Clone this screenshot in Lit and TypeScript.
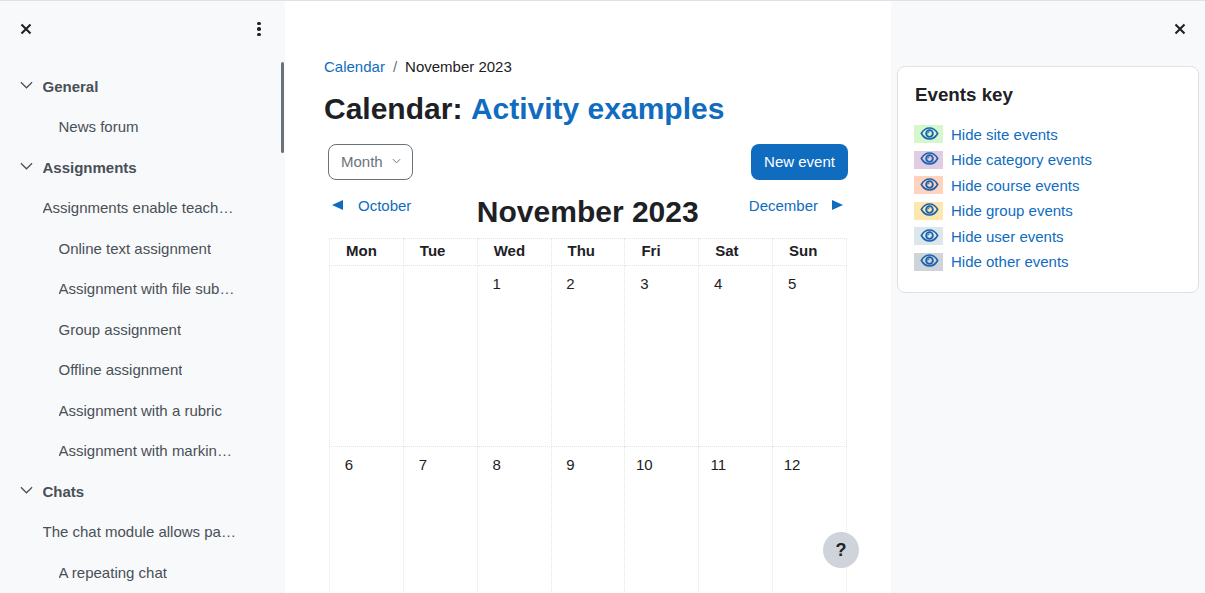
import { LitElement, html, css, svg } from "lit";
import { customElement } from "lit/decorators.js";

const close = html`<svg class="x" viewBox="0 0 12 12" width="12" height="12"><path d="M1.5 1.5 10.5 10.5M10.5 1.5 1.5 10.5" stroke="#1d2125" stroke-width="2.1" fill="none"/></svg>`;
const chevron = html`<svg class="chev" viewBox="0 0 14 8" width="13" height="8"><path d="M1 1 7 7 13 1" stroke="#495057" stroke-width="1.3" fill="none"/></svg>`;
const eye = svg`<svg class="eye" viewBox="0 0 20 14" width="19" height="13"><path d="M1.2 7C3.5 3 6.5 1.1 10 1.1S16.5 3 18.8 7C16.5 11 13.5 12.9 10 12.9S3.5 11 1.2 7Z" fill="none" stroke="#1a62ad" stroke-width="1.7"/><circle cx="10" cy="7" r="3.6" fill="none" stroke="#1a62ad" stroke-width="2"/><path d="M10 5.2A1.8 1.8 0 0 0 8.2 7" fill="none" stroke="#1a62ad" stroke-width="1.1"/></svg>`;

type Row = { t: string; k: "sec" | "l1" | "l2" };
const rows: Row[] = [
  { t: "General", k: "sec" },
  { t: "News forum", k: "l2" },
  { t: "Assignments", k: "sec" },
  { t: "Assignments enable teachers to grade", k: "l1" },
  { t: "Online text assignment", k: "l2" },
  { t: "Assignment with file submissions", k: "l2" },
  { t: "Group assignment", k: "l2" },
  { t: "Offline assignment", k: "l2" },
  { t: "Assignment with a rubric", k: "l2" },
  { t: "Assignment with marking guide", k: "l2" },
  { t: "Chats", k: "sec" },
  { t: "The chat module allows participants", k: "l1" },
  { t: "A repeating chat", k: "l2" },
];
const keys = [
  ["site", "#d4f7cd"],
  ["category", "#e0cce3"],
  ["course", "#ffd3bd"],
  ["group", "#fee7ae"],
  ["user", "#dce7ec"],
  ["other", "#ced4da"],
];
const days = ["Mon", "Tue", "Wed", "Thu", "Fri", "Sat", "Sun"];
const weeks = [
  ["", "", "1", "2", "3", "4", "5"],
  ["6", "7", "8", "9", "10", "11", "12"],
];

@customElement("app-root")
export class AppRoot extends LitElement {
  static styles = css`
    :host {
      display: block;
      height: 100vh;
      overflow: hidden;
      font-family: "Liberation Sans", Arial, sans-serif;
      font-size: 15px;
      color: #1d2125;
    }
    a { color: #0f6cbf; text-decoration: none; }
    .page {
      position: relative;
      display: grid;
      grid-template-columns: 285px 606px 1fr;
      height: 100%;
      box-sizing: border-box;
      border-top: 1px solid #dee2e6;
      overflow: hidden;
    }
    .left, .right { background: #f8f9fa; overflow: hidden; }
    .left { position: relative; }
    .lhead {
      display: flex;
      justify-content: space-between;
      align-items: center;
      height: 56px;
      padding: 0 24px 0 20px;
      margin-bottom: 9px;
    }
    .dots { display: flex; flex-direction: column; gap: 2px; }
    .dots i { width: 3.6px; height: 3.6px; background: #1d2125; border-radius: 50%; display: block; }
    .row {
      display: flex;
      align-items: center;
      height: 40.5px;
      width: 240px;
      color: #495057;
      box-sizing: border-box;
    }
    .row span { overflow: hidden; white-space: nowrap; text-overflow: ellipsis; min-width: 0; }
    .row.sec { font-weight: 700; padding-left: 20px; }
    .row.l1 { padding-left: 42.5px; }
    .row.l2 { padding-left: 58.5px; }
    .chev { flex: none; margin-right: 9.5px; margin-top: -3px; }
    .thumb {
      position: absolute;
      right: 1px;
      top: 61px;
      width: 3px;
      height: 91px;
      background: #6a737b;
      border-radius: 2px;
    }
    .main { padding: 0 0 0 39px; overflow: hidden; }
    .crumbs {
      display: flex;
      align-items: center;
      gap: 8px;
      height: 22px;
      margin-top: 54px;
    }
    .crumbs .sep { color: #6a737b; }
    h2 {
      margin: 14px 0 0;
      font-size: 30px;
      line-height: 36px;
      font-weight: 700;
    }
    h2 a { margin-left: 0.2px; }
    .bar {
      display: flex;
      justify-content: space-between;
      width: 520px;
      margin: 17px 0 0 4px;
    }
    .select {
      display: flex;
      align-items: center;
      gap: 9px;
      height: 36px;
      width: 85px;
      box-sizing: border-box;
      padding: 0 0 1px 12px;
      border: 1px solid #6a737b;
      border-radius: 8px;
      color: #6a737b;
    }
    .select svg { margin-top: -1px; }
    .btn {
      display: flex;
      align-items: center;
      justify-content: center;
      width: 97px;
      height: 36px;
      box-sizing: border-box;
      padding-bottom: 1px;
      background: #0f6cbf;
      color: #fff;
      border-radius: 8px;
    }
    .nav {
      display: grid;
      grid-template-columns: 1fr auto 1fr;
      width: 517px;
      height: 58px;
      margin-left: 5px;
    }
    .nav h3 {
      margin: 14px 0 0 0.5px;
      font-size: 30px;
      line-height: 36px;
      font-weight: 700;
    }
    .nl { display: flex; align-items: center; height: 22px; margin-top: 14px; gap: 14px; }
    .nl:not(.r) { gap: 15px; }
    .nl.r { justify-content: flex-end; padding-right: 3px; }
    .arrow { width: 0; height: 0; border-top: 5.5px solid transparent; border-bottom: 5.5px solid transparent; }
    .arrow.p { border-right: 11px solid #0f6cbf; margin-left: 3px; }
    .arrow.n { border-left: 11px solid #0f6cbf; }
    table {
      border-collapse: collapse;
      table-layout: fixed;
      width: 518px;
      margin-left: 5px;
    }
    th, td { border: 1px dotted #e3e6e9; padding: 0; text-align: left; }
    th { height: 23px; padding: 0 0 3px 16px; font-weight: 700; }
    td { height: 173px; vertical-align: top; padding: 7px 0 0 7px; line-height: 22px; }
    td span { display: inline-block; width: 24px; text-align: center; }
    .right { padding: 0 6px; }
    .rhead { display: flex; justify-content: flex-end; align-items: center; height: 56px; padding-right: 13px; margin-bottom: 9px; }
    .card {
      background: #fff;
      border: 1px solid #dee2e6;
      border-radius: 8px;
      padding: 16px;
      height: 227px;
      box-sizing: border-box;
    }
    .card h4 {
      margin: 0 0 14.5px 1px;
      font-size: 18.75px;
      line-height: 24px;
      font-weight: 700;
    }
    .key { display: flex; align-items: center; height: 25.5px; gap: 8px; }
    .sw {
      width: 29px;
      height: 18px;
      display: flex;
      justify-content: flex-end;
      align-items: flex-start;
      padding-right: 4px;
      box-sizing: border-box;
    }
    .eye { display: block; margin-top: 1.5px; }
    .help {
      position: absolute;
      left: 823px;
      top: 531px;
      width: 36px;
      height: 36px;
      border-radius: 50%;
      background: #ced4da;
      display: flex;
      align-items: center;
      justify-content: center;
      font-weight: 700;
      font-size: 18px;
    }
  `;

  render() {
    return html`<div class="page">
      <aside class="left">
        <div class="lhead">${close}<div class="dots"><i></i><i></i><i></i></div></div>
        ${rows.map(
          (r) => html`<div class="row ${r.k}">${r.k === "sec" ? chevron : ""}<span>${r.t}</span></div>`
        )}
        <div class="thumb"></div>
      </aside>
      <main class="main">
        <div class="crumbs"><a href="#">Calendar</a><span class="sep">/</span><span>November 2023</span></div>
        <h2>Calendar: <a href="#">Activity examples</a></h2>
        <div class="bar">
          <div class="select">Month<svg viewBox="0 0 10 6" width="9" height="6"><path d="M1 1 5 5 9 1" stroke="#6a737b" stroke-width="1.1" fill="none"/></svg></div>
          <div class="btn">New event</div>
        </div>
        <div class="nav">
          <div class="nl"><i class="arrow p"></i><a href="#">October</a></div>
          <h3>November 2023</h3>
          <div class="nl r"><a href="#">December</a><i class="arrow n"></i></div>
        </div>
        <table>
          <thead><tr>${days.map((d) => html`<th>${d}</th>`)}</tr></thead>
          <tbody>${weeks.map((w) => html`<tr>${w.map((c) => html`<td><span>${c}</span></td>`)}</tr>`)}</tbody>
        </table>
      </main>
      <aside class="right">
        <div class="rhead">${close}</div>
        <div class="card">
          <h4>Events key</h4>
          ${keys.map(
            ([n, c]) => html`<div class="key"><div class="sw" style="background:${c}">${eye}</div><a href="#">Hide ${n} events</a></div>`
          )}
        </div>
      </aside>
      <div class="help">?</div>
    </div>`;
  }
}
